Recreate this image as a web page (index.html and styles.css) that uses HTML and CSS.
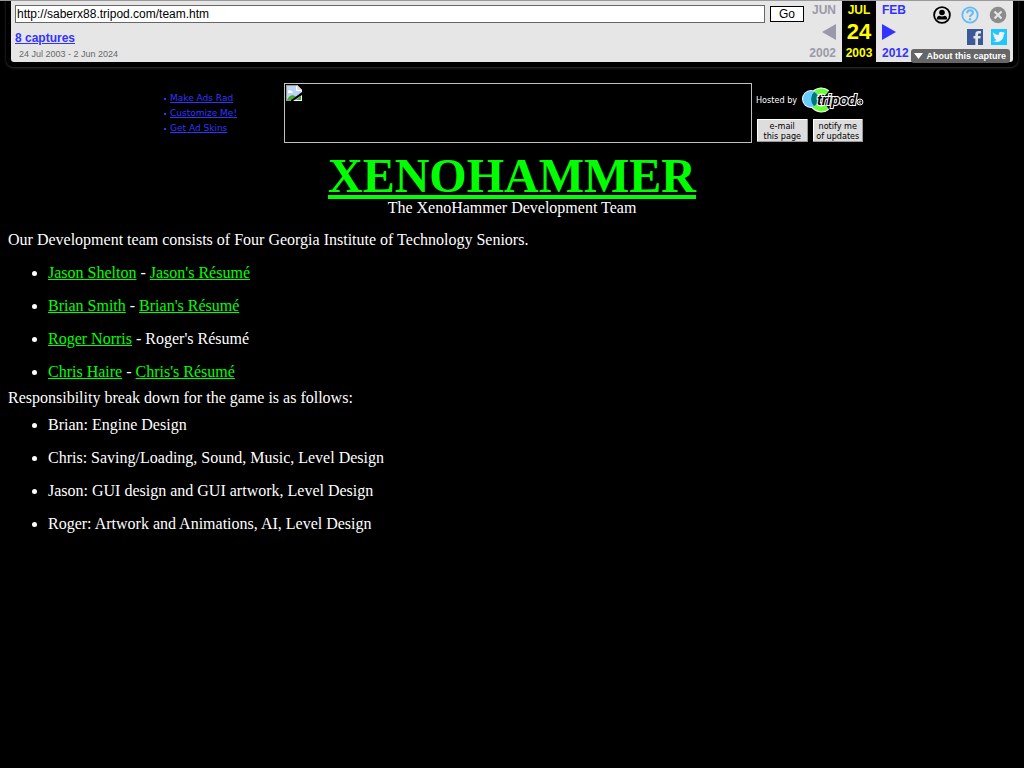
FILE: index.html
```
<!DOCTYPE html>
<html lang="en">
<head>
  <meta charset="UTF-8">
  <title>XenoHammer - The Development Team</title>
  <link rel="stylesheet" href="styles.css">
</head>
<body>
  <header class="toolbar">
    <div class="toolbar-main">
      <form class="search">
        <input type="text" class="url" aria-label="Address" value="http://saberx88.tripod.com/team.htm">
        <button type="submit" class="go">Go</button>
      </form>
      <a href="#" class="captures">8 captures</a>
      <div class="range">24 Jul 2003 - 2 Jun 2024</div>
    </div>

    <div class="date prev">
      <span>JUN</span>
      <svg class="arrow" viewBox="0 0 14 16"><path d="M14 0v16L0 8z" fill="#9999aa"/></svg>
      <span>2002</span>
    </div>
    <div class="date current">
      <span>JUL</span>
      <span class="day">24</span>
      <span>2003</span>
    </div>
    <div class="date next">
      <a href="#">FEB</a>
      <svg class="arrow" viewBox="0 0 14 16"><path d="M0 0v16l14-8z" fill="#3333ff"/></svg>
      <a href="#">2012</a>
    </div>

    <div class="tools">
      <div class="icons">
        <a href="#" aria-label="Log in">
          <svg width="18" height="18" viewBox="0 0 18 18"><circle cx="9" cy="9" r="7.900" fill="none" stroke="#000" stroke-width="1.800"/><circle cx="9" cy="6.500" r="2.800" fill="#000"/><path d="M3.800 13.500c0-2.600 1-3.400 2.600-3.700 1.600 1 3.600 1 5.200 0 1.600.3 2.600 1.100 2.600 3.700z" fill="#000"/></svg>
        </a>
        <a href="#" aria-label="Help">
          <svg width="18" height="18" viewBox="0 0 18 18"><circle cx="9" cy="9" r="7.700" fill="none" stroke="#5ebbf5" stroke-width="1.800"/><path d="M6.200 7.200c0-4 5.800-3.800 5.700-.4 0 2-2.900 2-2.900 4.200" fill="none" stroke="#5ebbf5" stroke-width="2"/><circle cx="9" cy="13.200" r="1.200" fill="#5ebbf5"/></svg>
        </a>
        <a href="#" aria-label="Close">
          <svg width="18" height="18" viewBox="0 0 18 18"><circle cx="9" cy="9" r="8.300" fill="#8c8c8c"/><path d="M5.500 5.500l7 7m0-7l-7 7" stroke="#e6e6e6" stroke-width="2.200"/></svg>
        </a>
      </div>
      <div class="icons social">
        <a href="#" aria-label="Facebook">
          <svg width="16" height="16" viewBox="0 0 16 16"><path d="M0 0h16v16H0z" fill="#3b5998"/><path d="M8.300 16V9.500H6.500V7h1.800V5.400C8.300 3 9.700 2 11.500 2H14v2.500h-1.500c-1.200 0-1.500.5-1.500 1.400V7h2.800l-.4 2.500H11V16z" fill="#e6e6e6"/></svg>
        </a>
        <a href="#" aria-label="Twitter">
          <svg width="16" height="16" viewBox="0 0 16 16"><path d="M0 0h16v16H0z" fill="#1dc7ff"/><path d="M2 3.200c1.600 1.800 3.300 2.700 5.700 2.800-.5-3.300 2.700-4.200 4.300-2.600l1.600-.6-.9 1.500 1.500-.4-1.500 1.600C12.600 12 7 14.500 2 12c1.500 0 2.700-.3 3.700-1.100-1.200-.1-2-.8-2.300-1.800h1.100C3.200 8.600 2.500 7.700 2.500 6.500l1.100.3C2.200 5.700 1.600 4.500 2 3.200z" fill="#f2f2f2"/></svg>
        </a>
      </div>
      <button type="button" class="about">
        <svg width="9" height="7" viewBox="0 0 9 7"><path d="M0 0h9L4.500 6z" fill="#fff"/></svg>About this capture
      </button>
    </div>
  </header>

  <div class="ad-bar">
    <ul class="ad-links">
      <li><a href="#">Make Ads Rad</a></li>
      <li><a href="#">Customize Me!</a></li>
      <li><a href="#">Get Ad Skins</a></li>
    </ul>
    <div class="banner">
      <!-- missing image icon -->
      <svg width="18" height="18" viewBox="0 0 18 18"><path d="M1 1h11l5 5v11H1z" fill="#fff"/><path d="M2 2h9v5h5v9H2z" fill="#bdd3f5"/><path d="M3 8c0-2 2-3 3-1 2 0 2 2 1 2H3z" fill="#fff"/><path d="M2 16c2-5 6-6 9-3l-3 3z" fill="#4ca832"/><path d="M12 1v5h5z" fill="#ddd"/><path d="M17 8v3l-9 6H5z" fill="#000"/><path d="M16 12v4h-5z" fill="#4ca832"/><path d="M1 1h11v1H2v14h4v1H1z" fill="#999"/></svg>
    </div>
    <div class="host">
      <a href="#" class="host-logo">
        <span>Hosted by</span>
        <svg width="62" height="26" viewBox="0 0 62 26">
          <path d="M25 6A9 9 0 1 0 25 20" fill="none" stroke="#fff" stroke-width="7"/>
          <circle cx="9" cy="12" r="9" fill="#fff"/>
          <path d="M25 6A9 9 0 1 0 25 20" fill="none" stroke="#66ff33" stroke-width="5"/>
          <circle cx="9" cy="12" r="8" fill="#66ccff"/>
          <path d="M12 5a8 8 0 0 1 0 14 10 10 0 0 1 0-14z" fill="#007777"/>
          <text x="15" y="18" class="logo-text">tripod</text>
          <circle cx="58" cy="15" r="3" fill="#000" stroke="#fff"/><path d="M57 17v-3h2v1h-2l2 2" fill="none" stroke="#fff" stroke-width=".6"/>
        </svg>
      </a>
      <div class="host-buttons">
        <button type="button">e-mail<br>this page</button>
        <button type="button">notify me<br>of updates</button>
      </div>
    </div>
  </div>

  <main class="content">
    <h1><a href="#">XENOHAMMER</a></h1>
    <div class="subtitle">The XenoHammer Development Team</div>

    <p>Our Development team consists of Four Georgia Institute of Technology Seniors.</p>
    <ul class="list">
      <li><a href="#">Jason Shelton</a> - <a href="#">Jason's Résumé</a></li>
      <li><a href="#">Brian Smith</a> - <a href="#">Brian's Résumé</a></li>
      <li><a href="#">Roger Norris</a> - Roger's Résumé</li>
      <li><a href="#">Chris Haire</a> - <a href="#">Chris's Résumé</a></li>
    </ul>
    <div class="breakdown">Responsibility break down for the game is as follows:</div>
    <ul class="list">
      <li>Brian: Engine Design</li>
      <li>Chris: Saving/Loading, Sound, Music, Level Design</li>
      <li>Jason: GUI design and GUI artwork, Level Design</li>
      <li>Roger: Artwork and Animations, AI, Level Design</li>
    </ul>
  </main>
</body>
</html>
```
FILE: styles.css
```
* {
  box-sizing: border-box;
}

body {
  margin: 0;
  background-color: #000;
  color: #fff;
  font-family: "Liberation Serif", "Times New Roman", serif;
  font-size: 16px;
  line-height: 18px;
  border-top: 1px solid #999;
}

svg {
  display: block;
}

.toolbar {
  display: flex;
  height: 61px;
  margin: 0 11px;
  background-color: #e6e6e6;
  border-radius: 0 0 3px 3px;
  box-shadow: 0 0 0 5px #000, 0 1px 3px 5px #333;
  clip-path: inset(0 -11px -11px -11px);
  font-family: "Liberation Sans", Arial, sans-serif;
  font-size: 12px;
  line-height: 14px;
}

.toolbar-main {
  flex: 1;
  padding: 4px 0 0 4px;
}

.search {
  display: flex;
  gap: 5px;
  margin-bottom: 8px;
}

.url {
  flex: 1;
  min-width: 0;
  height: 18px;
  padding: 0 1px;
  border: 1px solid #666;
  background-color: #fff;
  color: #000;
  font: 12px "Liberation Sans", Arial, sans-serif;
}

.go {
  width: 34px;
  height: 16px;
  margin-top: 1px;
  padding: 0;
  border: 1px solid #000;
  background-color: #fff;
  color: #000;
  font: 12px/14px "Liberation Sans", Arial, sans-serif;
}

.captures {
  display: block;
  color: #33f;
  font-weight: bold;
}

.range {
  padding: 2px 4px;
  color: #666;
  font-size: 9px;
}

.date {
  display: flex;
  flex-direction: column;
  justify-content: space-between;
  padding: 2px 0;
  font-weight: bold;
}

.date a {
  color: #33f;
  text-decoration: none;
}

.arrow {
  width: 14px;
  height: 16px;
}

.prev {
  width: 38px;
  padding-right: 6px;
  align-items: flex-end;
  color: #99a;
}

.current {
  width: 34px;
  align-items: center;
  background-color: #000;
  color: #ff0;
}

.day {
  font-size: 22px;
  line-height: 24px;
}

.next {
  width: 36px;
  padding-left: 6px;
}

.tools {
  display: flex;
  flex-direction: column;
  align-items: flex-end;
  width: 101px;
  padding: 5px 3px 0 0;
}

.icons {
  display: flex;
  gap: 10px;
  padding-right: 3px;
}

.social {
  gap: 8px;
  margin: 5px 0 4px;
}

.about {
  display: flex;
  align-items: center;
  gap: 3px;
  height: 14px;
  padding: 0 4px 0 3px;
  border: 0;
  border-radius: 3px;
  background-color: #666;
  color: #fff;
  font: 9px/14px "Liberation Sans", Arial, sans-serif;
  font-weight: bold;
  white-space: nowrap;
}

.ad-bar {
  display: flex;
  justify-content: center;
  margin-top: 21px;
}

.ad-links {
  width: 124px;
  margin: 0;
  padding: 8px 0 0 4px;
  list-style: none;
  font-family: "DejaVu Sans", Verdana, sans-serif;
  font-size: 9px;
  line-height: 15px;
}

.ad-links li {
  display: flex;
  align-items: center;
  gap: 4px;
}

.ad-links li::before {
  content: "";
  width: 2px;
  height: 2px;
  background-color: #33f;
}

.ad-links a {
  color: #33f;
}

.banner {
  width: 468px;
  height: 60px;
  border: 1px solid #c0c0c0;
}

.host {
  width: 112px;
  padding: 4px 0 0 4px;
}

.host-logo {
  display: flex;
  align-items: center;
  gap: 5px;
  height: 26px;
  color: #fff;
  font-family: "DejaVu Sans Condensed", "DejaVu Sans", sans-serif;
  font-size: 9px;
  text-decoration: none;
  white-space: nowrap;
}

.logo-text {
  font: italic bold 14px "Liberation Sans", Arial, sans-serif;
  fill: #000;
  stroke: #fff;
  stroke-width: 2px;
  paint-order: stroke;
}

.host-buttons {
  display: flex;
  gap: 3px;
  margin-top: 5px;
}

.host-buttons button {
  width: 53px;
  height: 25px;
  padding: 0;
  border: 1px solid #000;
  box-shadow: inset -1px -1px #999, inset 1px 1px #fff;
  background-color: #ddd;
  color: #000;
  font: 9px/10px "DejaVu Sans Condensed", "DejaVu Sans", sans-serif;
  white-space: nowrap;
}

.content {
  padding: 0 8px;
}

.content a {
  color: #0f0;
}

h1 {
  margin: 10px 0 0;
  font-size: 48px;
  line-height: 46px;
  text-align: center;
}

.subtitle {
  text-align: center;
}

p {
  margin: 14px 0 15px;
}

.list {
  display: flex;
  flex-direction: column;
  gap: 15px;
  margin: 0;
  padding-left: 40px;
}

.breakdown {
  margin: 8px 0 9px;
}
```
